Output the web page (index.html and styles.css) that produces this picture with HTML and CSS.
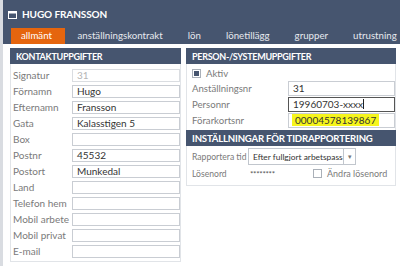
FILE: index.html
```html
<!DOCTYPE html>
<html lang="sv">
<head>
<meta charset="utf-8">
<title>Hugo Fransson</title>
<link rel="stylesheet" href="styles.css">
</head>
<body>
<div class="window">
  <div class="titlebar">
    <svg class="win-icon" width="9" height="8" viewBox="0 0 9 8"><rect x="0.5" y="0.5" width="8" height="7" fill="none" stroke="#fff" stroke-width="1"/><rect x="0" y="0" width="9" height="2.5" fill="#fff"/></svg>
    <span class="title">HUGO FRANSSON</span>
  </div>
  <div class="tabs">
    <span class="tab active">allmänt</span>
    <span class="tab">anställningskontrakt</span>
    <span class="tab">lön</span>
    <span class="tab">lönetillägg</span>
    <span class="tab">grupper</span>
    <span class="tab">utrustning</span>
  </div>
  <div class="content">
    <section class="panel left">
      <div class="panel-head">KONTAKTUPPGIFTER</div>
      <div class="rows">
        <div class="row"><span class="lbl">Signatur</span><span class="inp disabled">31</span></div>
        <div class="row"><span class="lbl">Förnamn</span><span class="inp">Hugo</span></div>
        <div class="row"><span class="lbl">Efternamn</span><span class="inp">Fransson</span></div>
        <div class="row"><span class="lbl">Gata</span><span class="inp">Kalasstigen 5</span></div>
        <div class="row"><span class="lbl">Box</span><span class="inp"></span></div>
        <div class="row"><span class="lbl">Postnr</span><span class="inp">45532</span></div>
        <div class="row"><span class="lbl">Postort</span><span class="inp">Munkedal</span></div>
        <div class="row"><span class="lbl">Land</span><span class="inp"></span></div>
        <div class="row"><span class="lbl">Telefon hem</span><span class="inp"></span></div>
        <div class="row"><span class="lbl">Mobil arbete</span><span class="inp"></span></div>
        <div class="row"><span class="lbl">Mobil privat</span><span class="inp"></span></div>
        <div class="row"><span class="lbl">E-mail</span><span class="inp"></span></div>
      </div>
    </section>
    <section class="panel right">
      <div class="panel-head">PERSON-/SYSTEMUPPGIFTER</div>
      <div class="rows r">
        <div class="check-row"><span class="cb checked"></span><span class="lbl">Aktiv</span></div>
        <div class="row"><span class="lbl wide">Anställningsnr</span><span class="inp">31</span></div>
        <div class="row"><span class="lbl wide">Personnr</span><span class="inp focus">19960703-xxxx<span class="caret"></span></span></div>
        <div class="row"><span class="lbl wide">Förarkortsnr</span><span class="inp"><span class="mark">00004578139867</span></span></div>
      </div>
      <div class="panel-head big">INSTÄLLNINGAR FÖR TIDRAPPORTERING</div>
      <div class="rows r2">
        <div class="row sel-row"><span class="lbl mid">Rapportera tid</span><span class="select"><span class="sel-text">Efter fullgjort arbetspass</span><span class="sel-btn">▾</span></span></div>
        <div class="row pw-row"><span class="lbl mid">Lösenord</span><span class="stars">********</span><span class="cb"></span><span class="lbl small">Ändra lösenord</span></div>
      </div>
    </section>
  </div>
</div>
</body>
</html>
```
FILE: styles.css
```css
* { box-sizing: border-box; }
html, body { margin: 0; padding: 0; background: #fff; }
body { width: 400px; height: 266px; overflow: hidden; font-family: "Lato", "Liberation Sans", sans-serif; }
.window { border-left: 3px solid #d9dce1; height: 266px; overflow: hidden; }
.titlebar {
  height: 28px; background: #46556f; display: flex; align-items: center;
  padding-left: 5px; color: #fff;
}
.win-icon { margin-right: 5px; margin-top: 1px; }
.title { font-size: 10px; font-weight: 700; letter-spacing: -0.1px; }
.tabs {
  height: 16px; background: #46556f; display: flex; align-items: stretch;
  padding-left: 8px;
}
.tab {
  color: #e6e9ee; font-size: 9.7px; padding: 0 12.5px; display: flex; align-items: center;
  line-height: 1; white-space: nowrap;
}
.tab.active { background: #e5650e; color: #fff; padding: 0 13px 0 10px; }
.content { display: flex; align-items: flex-start; padding: 4px 4px 0 7px; gap: 5px; }
.panel { border: 1px solid #e1e4e8; border-top: none; flex: none; }
.panel.left { width: 171px; padding-bottom: 2px; }
.panel.right { width: 210px; padding-bottom: 4px; }
.panel-head {
  height: 16px; background: #46556f; color: #fff; font-size: 9px; font-weight: 700;
  display: flex; align-items: center; padding-left: 6px; margin: 0 -1px; white-space: nowrap;
  letter-spacing: -0.3px;
}
.panel-head.big { font-size: 9.6px; height: 16px; margin-top: 2px; letter-spacing: -0.2px; }
.rows { padding: 3px 0 0 2px; display: flex; flex-direction: column; }
.row { display: flex; align-items: center; height: 16px; }
.lbl { color: #7a7a7a; font-size: 10px; white-space: nowrap; }
.left .lbl { width: 59px; }
.inp {
  height: 13px; border: 1px solid #c9cdd3; font-size: 10px; color: #333;
  padding: 0 3px 0 4px; display: flex; align-items: center; line-height: 1; white-space: nowrap;
}
.left .inp { width: 108px; }
.inp.disabled { color: #b5b5b5; border-color: #dadde1; }
.rows.r { padding-left: 5px; padding-top: 2px; }
.r .lbl { font-size: 9.6px; }
.r .lbl.wide { width: 96px; }
.r .inp { width: 107px; height: 15px; }
.r .row { height: 16px; }
.inp.focus { border-color: #555; }
.caret { display: inline-block; width: 1px; height: 10px; background: #222; margin-left: 0; }
.mark { background: #f6f51c; padding: 1px 3px; margin-left: -1px; }
.check-row { display: flex; align-items: center; height: 14px; }
.cb {
  width: 9px; height: 9px; border: 1px solid #aab0b8; display: inline-block; margin-right: 5px;
  position: relative; background: #fff; flex: none;
}
.cb.checked::after {
  content: ""; position: absolute; left: 1px; top: 1px; width: 5px; height: 5px; background: #46556f;
}
.rows.r2 { padding-left: 5px; padding-top: 1px; }
.lbl.mid { width: 56px; font-size: 8.6px; }
.lbl.small { font-size: 9px; }
.sel-row { height: 19px; }
.select {
  display: flex; height: 17px; border: 1px solid #c1c6cd; width: 108px; align-items: stretch; flex: none;
}
.sel-text { font-size: 8.4px; color: #333; padding-left: 4px; display: flex; align-items: center; flex: 1; white-space: nowrap; overflow: hidden; }
.sel-btn { width: 12px; border-left: 1px solid #c1c6cd; font-size: 7px; color: #777; display: flex; align-items: center; justify-content: center; }
.pw-row { height: 15px; }
.stars { font-size: 8px; color: #555; width: 65px; padding-left: 2px; letter-spacing: -0.3px; }
```
